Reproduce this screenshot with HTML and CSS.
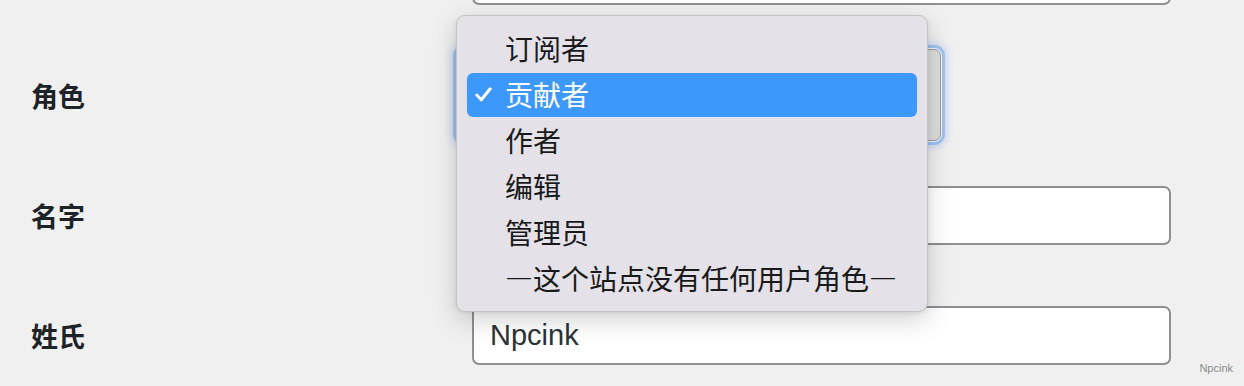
FILE: index.html
```html
<!DOCTYPE html>
<html lang="zh-CN">
<head>
<meta charset="utf-8">
<title>用户资料</title>
<link rel="stylesheet" href="styles.css">
</head>
<body>
<div class="page">
  <form class="form">
    <div class="row">
      <div class="label"></div>
      <div class="field"><div class="input"></div></div>
    </div>
    <div class="row">
      <div class="label">角色</div>
      <div class="field"><div class="select" aria-label="角色"></div></div>
    </div>
    <div class="row">
      <div class="label">名字</div>
      <div class="field"><div class="input"></div></div>
    </div>
    <div class="row">
      <div class="label">姓氏</div>
      <div class="field"><div class="input">Npcink</div></div>
    </div>
  </form>

  <ul class="menu" role="listbox">
    <li class="item">订阅者</li>
    <li class="item selected"><svg class="check" viewBox="0 0 17 15" width="17" height="15"><polyline points="1.8,8 6.3,12.8 15.2,1.8" fill="none" stroke="#fff" stroke-width="3" stroke-linecap="round" stroke-linejoin="round"/></svg>贡献者</li>
    <li class="item">作者</li>
    <li class="item">编辑</li>
    <li class="item">管理员</li>
    <li class="item">—这个站点没有任何用户角色—</li>
  </ul>

  <div class="watermark">Npcink</div>
</div>
</body>
</html>
```

FILE: styles.css
```css
html, body {
  margin: 0;
  padding: 0;
  background: #f0f0f1;
}

.page {
  position: relative;
  width: 1244px;
  height: 386px;
  overflow: hidden;
  font-family: "Noto Sans CJK SC", "Noto Sans", sans-serif;
}

.form {
  margin-top: -85px;
  display: flex;
  flex-direction: column;
}

.row {
  height: 120px;
  display: grid;
  grid-template-columns: 472px 699px;
  align-items: center;
}

.label {
  padding-left: 31px;
  font-size: 27px;
  font-weight: 700;
  color: #1d2327;
  line-height: 1;
}

.field {
  display: flex;
  align-items: center;
}

.input {
  box-sizing: border-box;
  width: 699px;
  height: 59px;
  background: #fff;
  border: 2px solid #8f8f91;
  border-radius: 7px;
  padding-left: 16px;
  display: flex;
  align-items: center;
  font-family: "Liberation Sans", Arial, sans-serif;
  font-size: 29px;
  color: #2c3338;
}

.select {
  box-sizing: border-box;
  margin-left: -15px;
  width: 484px;
  height: 92px;
  background: #dddddd;
  border: 1px solid #9b9b9b;
  border-radius: 7px;
  box-shadow: 0 0 0 1px #f3f6fb, 0 0 0 4px #9fc3f2, 0 0 9px 5px rgba(95, 155, 240, 0.35);
}

.menu {
  position: absolute;
  left: 456px;
  top: 15px;
  width: 472px;
  height: 297px;
  box-sizing: border-box;
  margin: 0;
  padding: 10px 10px;
  list-style: none;
  background: #e4e2e8;
  border: 1px solid #c4c3c8;
  border-radius: 9px;
  box-shadow: 0 8px 26px rgba(0, 0, 0, 0.18), 0 1px 4px rgba(0, 0, 0, 0.08);
}

.item {
  position: relative;
  height: 46px;
  box-sizing: border-box;
  padding-left: 38px;
  padding-bottom: 3px;
  display: flex;
  align-items: center;
  font-size: 28px;
  font-weight: 400;
  color: #1a1a1b;
  line-height: 1;
}

.item.selected {
  height: 44px;
  margin: 1px 0;
  background: #3d98fc;
  border-radius: 6px;
  color: #fff;
}

.check {
  position: absolute;
  left: 8px;
  top: 14px;
}

.watermark {
  position: absolute;
  right: 11px;
  bottom: 12px;
  font-family: "Liberation Sans", Arial, sans-serif;
  font-size: 11px;
  color: #8a8a8a;
}
```
